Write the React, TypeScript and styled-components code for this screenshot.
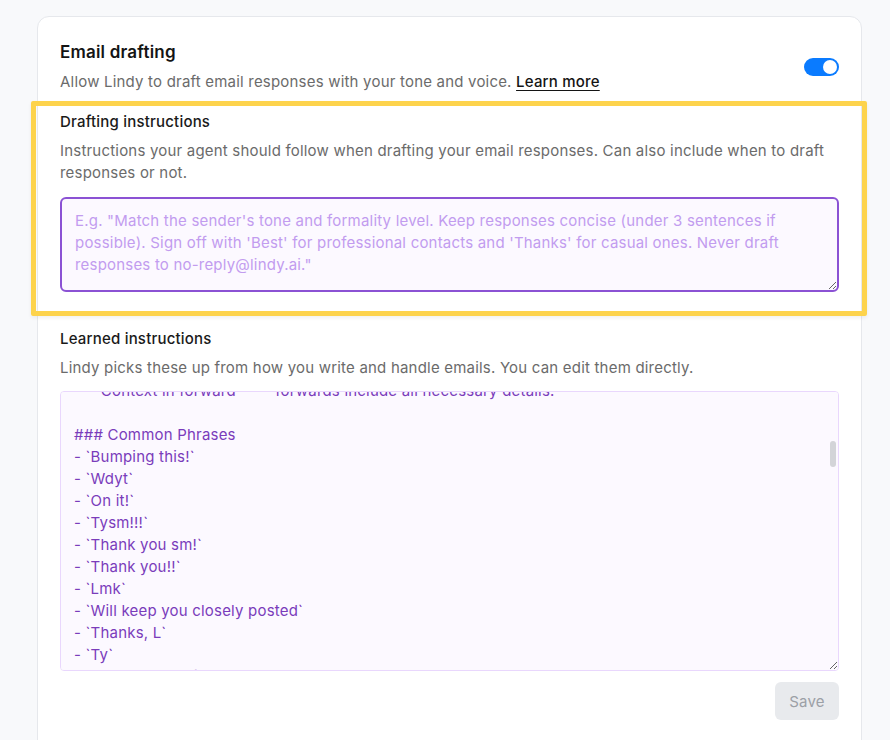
import React, { useLayoutEffect, useRef } from "react";
import styled, { createGlobalStyle } from "styled-components";

const GlobalStyle = createGlobalStyle`
  html, body { margin: 0; padding: 0; background: #f8f9fb; }
  body { font-family: Inter, "Noto Sans", sans-serif; -webkit-font-smoothing: antialiased; letter-spacing: 0.2px; }
  * { box-sizing: border-box; }
`;

const Page = styled.div`
  padding: 16px 28px 0 37px;
  height: 740px;
  overflow: hidden;
`;

const Card = styled.section`
  background: #ffffff;
  border: 1px solid #e6e8ec;
  border-radius: 12px;
  padding: 23px 22px 60px 22px;
`;

const Header = styled.div`
  display: flex;
  align-items: center;
  justify-content: space-between;
`;

const HeaderText = styled.div`
  display: flex;
  flex-direction: column;
  gap: 7px;
`;

const Title = styled.h2`
  margin: 0;
  font-size: 17px;
  line-height: 24px;
  font-weight: 600;
  color: #141414;
`;

const Description = styled.p<{ $gap?: number }>`
  margin: ${(p) => p.$gap ?? 0}px 0 0 0;
  font-size: 15px;
  line-height: 22px;
  color: #6b6b6b;
`;

const LearnMore = styled.a`
  color: #141414;
  font-weight: 500;
  text-decoration: underline;
  text-underline-offset: 3px;
  cursor: pointer;
`;

const Toggle = styled.button<{ $on: boolean }>`
  position: relative;
  width: 35px;
  height: 18px;
  margin: 0;
  padding: 0;
  border: none;
  border-radius: 9px;
  background: ${(p) => (p.$on ? "#0a7bff" : "#d1d5db")};
  cursor: pointer;
  &::after {
    content: "";
    position: absolute;
    top: 2px;
    left: ${(p) => (p.$on ? "19px" : "2px")};
    width: 14px;
    height: 14px;
    border-radius: 50%;
    background: #ffffff;
  }
`;

const Highlight = styled.div`
  margin: 8px -28px 0 -29px;
  border: 5px solid #fdd34c;
  border-radius: 2px;
  padding: 5px 23px 19px 24px;
  box-shadow: 0 2px 4px rgba(0, 0, 0, 0.06);
`;

const Section = styled.div<{ $top?: number }>`
  margin-top: ${(p) => p.$top ?? 0}px;
  display: flex;
  flex-direction: column;
`;

const SectionTitle = styled.h3`
  margin: 0;
  font-size: 15px;
  line-height: 22px;
  font-weight: 500;
  color: #1a1a1a;
`;

const DraftArea = styled.textarea`
  display: block;
  width: 100%;
  height: 95px;
  margin-top: 13px;
  padding: 11px 13px;
  border: 2px solid #8b52d4;
  border-radius: 6px;
  background: #fcf9ff;
  font-family: Inter, "Noto Sans", sans-serif;
  font-size: 15px;
  line-height: 22px;
  letter-spacing: 0.2px;
  color: #7b3fbf;
  caret-color: #3b1a66;
  outline: none;
  resize: vertical;
  &::placeholder {
    color: #c29cef;
  }
`;

const LearnedWrap = styled.div`
  position: relative;
  margin-top: 12px;
`;

const LearnedArea = styled.textarea`
  display: block;
  width: 100%;
  height: 280px;
  padding: 12px 13px;
  border: 1px solid #e9d7fd;
  border-radius: 4px;
  background: #fcf9ff;
  font-family: Inter, "Noto Sans", sans-serif;
  font-size: 15px;
  line-height: 22px;
  letter-spacing: 0.2px;
  color: #7a3cbb;
  outline: none;
  resize: vertical;
  scrollbar-width: none;
  &::-webkit-scrollbar {
    display: none;
  }
`;

const ScrollThumb = styled.div`
  position: absolute;
  top: 50px;
  right: 3px;
  width: 6px;
  height: 26px;
  border-radius: 3px;
  background: #d3d4d8;
  pointer-events: none;
`;

const Footer = styled.div`
  display: flex;
  justify-content: flex-end;
  margin-top: 11px;
`;

const SaveButton = styled.button`
  width: 64px;
  height: 38px;
  border: none;
  border-radius: 6px;
  background: #e8eaed;
  color: #9ca0a6;
  font-family: Inter, "Noto Sans", sans-serif;
  font-size: 15px;
  letter-spacing: 0.2px;
  cursor: not-allowed;
`;

const learned = [
  "## Writing Style",
  "- Tone: casual, warm, and direct",
  "- Keep emails short — usually 1–3 sentences",
  "- Lowercase greetings are fine for internal threads",
  "- Use exclamation points to sound friendly",
  "- Avoid long formal intros and filler",
  "",
  "### Greetings",
  "- `Hey {first name}!`",
  "- `Hi {first name},`",
  "- `Hi all,`",
  "",
  "### Sign-offs",
  "- `Best,`",
  "- `Thanks!`",
  "- `Cheers,`",
  "",
  "### Email Handling",
  "- Reply quickly to scheduling requests with specific times",
  "- Loop in teammates by cc'ing them instead of forwarding",
  "- Decline vendor pitches politely or ignore them",
  "- Never reply to newsletters or automated emails",
  "- Keep threads focused on a single topic",
  "- **Context in forward** — forwards include all necessary details.",
  "",
  "### Common Phrases",
  "- `Bumping this!`",
  "- `Wdyt`",
  "- `On it!`",
  "- `Tysm!!!`",
  "- `Thank you sm!`",
  "- `Thank you!!`",
  "- `Lmk`",
  "- `Will keep you closely posted`",
  "- `Thanks, L`",
  "- `Ty`",
  "- `Let me know if you have any questions or need anything else`",
  "- `Sounds good!`",
  "- `Happy to help`",
  "- `Looping in`",
  "- `Circling back on this`",
  "",
  "### Scheduling",
  "- Offer 2–3 concrete time slots",
  "- Default to 30 minute meetings",
  "- Share the calendar link for external contacts",
  "- Confirm time zones explicitly",
  "",
  "### Formatting",
  "- Rarely use bullet points in replies",
  "- No signatures with titles",
  "- Avoid bold or italic text",
  "- Use short paragraphs",
  "",
  "### When Not to Draft",
  "- Newsletters and marketing emails",
  "- Calendar notifications",
  "- Receipts and invoices",
  "- Emails from no-reply addresses",
  "- Threads where I'm only cc'd",
  "",
  "### Follow-ups",
  "- Follow up after 3 business days",
  "- Keep follow-ups to one line",
  "- `Bumping this to the top of your inbox!`",
  "",
  "### Internal Emails",
  "- Skip greetings for quick replies",
  "- Use first names only",
  "- Emojis are ok sparingly",
  "",
  "### External Emails",
  "- Slightly more formal",
  "- Always include a greeting",
  "- Close with `Best,`",
].join("\n");

const LINE = 22;
const PAD = 12;
const CONTEXT_INDEX = 23;

export default function App() {
  const learnedRef = useRef<HTMLTextAreaElement>(null);
  const draftRef = useRef<HTMLTextAreaElement>(null);

  useLayoutEffect(() => {
    if (learnedRef.current) {
      learnedRef.current.scrollTop = PAD + CONTEXT_INDEX * LINE + 12;
    }
    if (draftRef.current) {
      draftRef.current.focus({ preventScroll: true });
    }
  }, []);

  return (
    <>
      <GlobalStyle />
      <Page>
        <Card>
          <Header>
            <HeaderText>
              <Title>Email drafting</Title>
              <Description>
                Allow Lindy to draft email responses with your tone and voice.{" "}
                <LearnMore>Learn more</LearnMore>
              </Description>
            </HeaderText>
            <Toggle $on aria-label="Email drafting enabled" />
          </Header>

          <Highlight>
            <Section>
              <SectionTitle>Drafting instructions</SectionTitle>
              <Description $gap={7}>
                Instructions your agent should follow when drafting your email responses. Can also include when to
                draft responses or not.
              </Description>
              <DraftArea
                ref={draftRef}
                placeholder={
                  "E.g. \"Match the sender's tone and formality level. Keep responses concise (under 3 sentences if possible). Sign off with 'Best' for professional contacts and 'Thanks' for casual ones. Never draft responses to no-reply@lindy.ai.\""
                }
              />
            </Section>
          </Highlight>

          <Section $top={12}>
            <SectionTitle>Learned instructions</SectionTitle>
            <Description $gap={7}>
              Lindy picks these up from how you write and handle emails. You can edit them directly.
            </Description>
            <LearnedWrap>
              <LearnedArea ref={learnedRef} defaultValue={learned} spellCheck={false} />
              <ScrollThumb />
            </LearnedWrap>
          </Section>

          <Footer>
            <SaveButton disabled>Save</SaveButton>
          </Footer>
        </Card>
      </Page>
    </>
  );
}
